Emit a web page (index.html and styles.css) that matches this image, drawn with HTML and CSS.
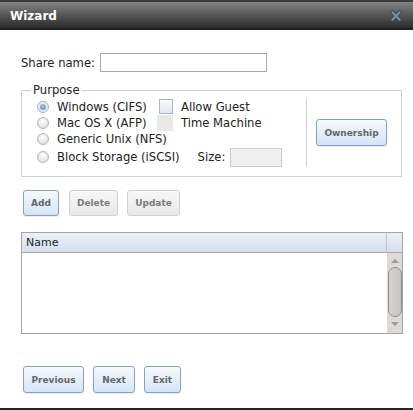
FILE: index.html
```html
<!DOCTYPE html>
<html>
<head>
<meta charset="utf-8">
<link rel="stylesheet" href="styles.css">
</head>
<body>
<div class="dialog">
  <div class="titlebar">
    <span class="title">Wizard</span>
    <svg class="close" width="12" height="12" viewBox="0 0 12 12">
      <path d="M2.5 2.5 L9.5 9.5 M9.5 2.5 L2.5 9.5" stroke="#3e4954" stroke-width="4" stroke-linecap="square"/>
      <path d="M2.5 2.5 L9.5 9.5 M9.5 2.5 L2.5 9.5" stroke="#7f8fa0" stroke-width="2" stroke-linecap="square"/>
    </svg>
  </div>
  <div class="content">
    <div class="share-row">
      <span class="lbl">Share name:</span>
      <span class="text-input"></span>
    </div>
    <fieldset class="purpose">
      <legend>Purpose</legend>
      <div class="purpose-inner">
        <div class="opts">
          <div class="row r1">
            <span class="radio checked"></span>
            <span class="rlabel">Windows (CIFS)</span>
            <span class="check"></span>
            <span class="clabel">Allow Guest</span>
          </div>
          <div class="row r2">
            <span class="radio"></span>
            <span class="rlabel">Mac OS X (AFP)</span>
            <span class="check disabled"></span>
            <span class="clabel">Time Machine</span>
          </div>
          <div class="row r3">
            <span class="radio"></span>
            <span class="rlabel">Generic Unix (NFS)</span>
          </div>
          <div class="row r4">
            <span class="radio"></span>
            <span class="rlabel wide">Block Storage (iSCSI)</span>
            <span class="size-lbl">Size:</span>
            <span class="size-input"></span>
          </div>
        </div>
        <div class="sep"></div>
        <span class="btn blue own">Ownership</span>
      </div>
    </fieldset>
    <div class="toolbar">
      <span class="btn blue b-add">Add</span>
      <span class="btn grey b-del">Delete</span>
      <span class="btn grey b-upd">Update</span>
    </div>
    <div class="grid">
      <div class="grid-head">
        <span class="col-name">Name</span>
        <span class="col-pad"></span>
      </div>
      <div class="grid-body">
        <div class="rows"></div>
        <div class="scrollbar">
          <span class="arrow up"></span>
          <span class="thumb"></span>
          <span class="arrow down"></span>
        </div>
      </div>
    </div>
    <div class="nav">
      <span class="btn blue b-prev">Previous</span>
      <span class="btn blue b-next">Next</span>
      <span class="btn blue b-exit">Exit</span>
    </div>
  </div>
</div>
</body>
</html>
```
FILE: styles.css
```css
* { box-sizing: border-box; }
html, body { margin: 0; padding: 0; background: #fff; }
body {
  font-family: "DejaVu Sans", Verdana, sans-serif;
  font-size: 11.6px;
  color: #222;
}
.dialog {
  width: 413px;
  height: 410px;
  display: flex;
  flex-direction: column;
  border-bottom: 2px solid #262626;
}
.titlebar {
  height: 30px;
  border-top: 2px solid #3d3d3d;
  border-bottom: 2px solid #1f1f1f;
  background: linear-gradient(#828282, #2a2a2a);
  display: flex;
  align-items: center;
  padding: 0 11px 0 10px;
}
.title {
  color: #fff;
  font-weight: bold;
  font-size: 12px;
  flex: 1;
  padding-top: 2px;
}
.close { display: block; margin-top: 2px; }
.content {
  flex: 1;
  padding: 23px 0 0 21px;
}
.share-row {
  display: flex;
  align-items: center;
  height: 19px;
}
.lbl { margin-right: 5px; }
.text-input {
  width: 167px;
  height: 19px;
  border: 1px solid #a9a9a9;
  background: #fff;
}
.purpose {
  margin: 11px 0 0 0;
  width: 381px;
  border: 1px solid #cfcfcf;
  padding: 1px 14px 9px 15px;
}
.purpose legend {
  font-size: 11.6px;
  line-height: 14px;
  padding: 0 2px;
  margin-left: -6px;
  color: #222;
}
.purpose-inner {
  display: flex;
  align-items: stretch;
}
.opts { width: 269px; }
.row {
  display: flex;
  align-items: center;
  height: 16px;
}
.row.r1 { height: 17px; }
.row.r4 { height: 20px; }
.radio {
  width: 12px;
  height: 12px;
  border-radius: 50%;
  border: 1px solid #b4b4b4;
  background: radial-gradient(circle at 50% 35%, #fdfdfd, #dadada);
  flex: none;
  display: flex;
  align-items: center;
  justify-content: center;
}
.radio.checked { border-color: #9fb2c8; background: radial-gradient(circle at 50% 40%, #f6f9fc, #d7e1ec); }
.radio.checked::after {
  content: "";
  width: 6px;
  height: 6px;
  border-radius: 50%;
  background: radial-gradient(circle at 50% 35%, #a9c4e2, #5f8ab8);
}
.rlabel {
  margin-left: 8px;
  width: 102px;
  white-space: nowrap;
}
.rlabel.wide { width: auto; }
.check {
  width: 14px;
  height: 15px;
  border: 1px solid #a7b5c4;
  background: linear-gradient(#fbfcfe, #dfe7f0);
  flex: none;
}
.check.disabled {
  width: 16px;
  height: 16px;
  margin-left: -2px;
  border: none;
  background: #e9e9e9;
}
.clabel { margin-left: 8px; white-space: nowrap; }
.size-lbl { margin-left: 18px; }
.size-input {
  margin-left: 5px;
  width: 52px;
  height: 19px;
  border: 1px solid #cdcdcd;
  background: #efefef;
}
.sep {
  width: 1px;
  background: #cfcfcf;
  margin-right: 9px;
}
.btn {
  display: inline-flex;
  align-items: center;
  justify-content: center;
  font-weight: bold;
  font-size: 9px;
  border-radius: 3px;
  color: #666;
  white-space: nowrap;
}
.btn.blue {
  border: 1px solid #83a2c5;
  background: linear-gradient(#f6f9fd, #d4e5f8);
  box-shadow: 0 1px 1px rgba(0,0,0,0.08);
}
.btn.grey {
  border: 1px solid #d0d0d0;
  background: linear-gradient(#f7f7f7, #e8e8e8);
  color: #7b7b7b;
}
.own { width: 71px; height: 27px; align-self: center; }
.toolbar {
  display: flex;
  margin: 13px 0 0 2px;
  height: 26px;
}
.toolbar .btn { height: 26px; }
.b-add { width: 36px; }
.b-del { width: 49px; margin-left: 10px; }
.b-upd { width: 53px; margin-left: 9px; }
.grid {
  margin-top: 16px;
  width: 382px;
  height: 102px;
  border: 1px solid #a5a5a5;
  display: flex;
  flex-direction: column;
}
.grid-head {
  height: 20px;
  display: flex;
  background: linear-gradient(#ebf0f6, #d6e0ea);
  border-bottom: 1px solid #a9a9a9;
}
.col-name {
  flex: 1;
  padding-left: 4px;
  font-size: 11px;
  line-height: 19px;
  border-right: 1px solid #b9c2cc;
}
.col-pad { width: 15px; }
.grid-body { flex: 1; display: flex; }
.rows { flex: 1; background: #fff; }
.scrollbar {
  width: 15px;
  background: #dcd9d6;
  display: flex;
  flex-direction: column;
  align-items: center;
}
.arrow {
  width: 0; height: 0;
  border-left: 4px solid transparent;
  border-right: 4px solid transparent;
}
.arrow.up { border-bottom: 4px solid #9a9a9a; margin-top: 6px; }
.arrow.down { border-top: 4px solid #9a9a9a; margin-top: 5px; }
.thumb {
  width: 14px;
  height: 50px;
  margin-top: 4px;
  border: 1px solid #8e8e8e;
  border-radius: 7px;
  background: linear-gradient(90deg, #d6d4d2, #c6c4c2);
}
.nav {
  display: flex;
  margin: 32px 0 0 2px;
}
.nav .btn { height: 27px; }
.b-prev { width: 61px; }
.b-next { width: 42px; margin-left: 9px; }
.b-exit { width: 37px; margin-left: 9px; }
```
